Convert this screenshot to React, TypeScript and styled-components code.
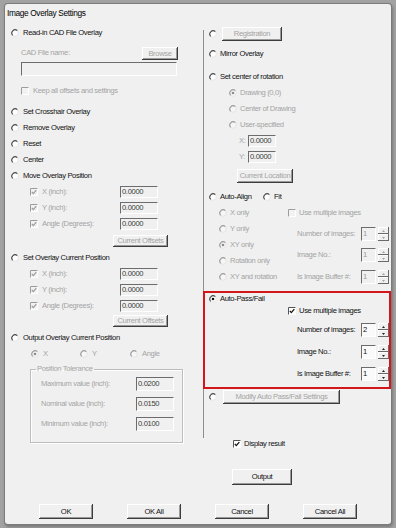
import React from "react";
import styled, { createGlobalStyle } from "styled-components";

const FONT = `"Liberation Sans", Arial, sans-serif`;
const FS = "7.6px";
const LS = "-0.35px";

const GlobalStyle = createGlobalStyle`
  html, body { margin: 0; padding: 0; }
  body {
    background: #a2a2a2;
    width: 396px;
    height: 528px;
    overflow: hidden;
    font-family: ${FONT};
  }
  #root { padding-top: 4px; }
`;

const Dialog = styled.div`
  box-sizing: border-box;
  margin-left: 5px;
  width: 386px;
  height: 520px;
  background: #f0f0f0;
  box-shadow: 0 0 0 1px #7b7b7b, 1px 2px 3px 1px rgba(0, 0, 0, 0.25);
  border-radius: 3px;
  display: flex;
  flex-direction: column;
  font-family: ${FONT};
  font-size: ${FS};
  letter-spacing: ${LS};
  color: #111;
`;

const Title = styled.div`
  box-sizing: border-box;
  height: 21px;
  padding: 4px 0 0 2px;
  font-size: 8.3px;
  line-height: 10px;
  color: #000;
`;

const Body = styled.div`
  display: flex;
  height: 475px;
`;

const LeftCol = styled.div`
  width: 198px;
  display: flex;
  flex-direction: column;
`;

const RightCol = styled.div`
  width: 188px;
  display: flex;
  flex-direction: column;
`;

const Pane = styled.div`
  margin-top: 5px;
  height: 408px;
  border-left: 1px solid #8e8e8e;
  display: flex;
  flex-direction: column;
`;

const Row = styled.div<{ $h: number; $pl?: number; $mt?: number; $pr?: number }>`
  box-sizing: border-box;
  flex-shrink: 0;
  display: flex;
  align-items: center;
  height: ${(p) => p.$h}px;
  padding-left: ${(p) => p.$pl ?? 0}px;
  padding-right: ${(p) => p.$pr ?? 0}px;
  margin-top: ${(p) => p.$mt ?? 0}px;
`;

const Text = styled.span<{ $off?: boolean; $w?: number; $gap?: number }>`
  white-space: nowrap;
  line-height: 10px;
  color: ${(p) => (p.$off ? "#a4a4a4" : "#111")};
  margin-left: ${(p) => p.$gap ?? 4}px;
  ${(p) => (p.$w ? `width: ${p.$w}px; flex-shrink: 0;` : "")}
`;

const Option = styled.div<{ $w?: number }>`
  display: flex;
  align-items: center;
  ${(p) => (p.$w ? `width: ${p.$w}px; flex-shrink: 0;` : "")}
`;

const Spacer = styled.div`
  flex: 1;
`;

const Field = styled.div<{ $w: number; $h: number; $ml?: number; $mt?: number; $white?: boolean; $dim?: boolean }>`
  box-sizing: border-box;
  flex-shrink: 0;
  width: ${(p) => p.$w}px;
  height: ${(p) => p.$h}px;
  margin-left: ${(p) => p.$ml ?? 0}px;
  margin-top: ${(p) => p.$mt ?? 0}px;
  border-top: 1px solid #6c6c6c;
  border-left: 1px solid #6c6c6c;
  border-right: 1px solid #ffffff;
  border-bottom: 1px solid #ffffff;
  background: ${(p) => (p.$white ? "#fafafa" : "#f0f0f0")};
  color: ${(p) => (p.$dim ? "#9a9a9a" : p.$white ? "#111" : "#3a3a3a")};
  font-size: ${FS};
  line-height: ${(p) => p.$h - 2}px;
  padding-left: 1px;
  overflow: hidden;
  white-space: nowrap;
`;

const Btn = styled.button<{ $w: number; $h: number; $off?: boolean; $ml?: number }>`
  box-sizing: border-box;
  flex-shrink: 0;
  width: ${(p) => p.$w}px;
  height: ${(p) => p.$h}px;
  margin: 0 0 0 ${(p) => p.$ml ?? 0}px;
  padding: 0;
  border: 0;
  background: #f0f0f0;
  box-shadow: inset -1px -1px #3c3c3c, inset 1px 1px #ffffff, inset -2px -2px #9a9a9a;
  font-family: ${FONT};
  font-size: ${FS};
  letter-spacing: ${LS};
  line-height: ${(p) => p.$h - 2}px;
  color: ${(p) => (p.$off ? "#a4a4a4" : "#111")};
  white-space: nowrap;
  cursor: default;
`;

const Group = styled.fieldset`
  box-sizing: border-box;
  margin: 3px 0 0 25px;
  width: 153px;
  padding: 0 0 8px 0;
  border: 1px solid #bdbdbd;
  box-shadow: 1px 1px 0 #ffffff, inset 1px 1px 0 #ffffff;
  min-inline-size: 0;
  display: flex;
  flex-direction: column;
`;

const Legend = styled.legend`
  margin-left: 5px;
  padding: 0 1px;
  line-height: 10px;
  color: #a4a4a4;
  font-size: ${FS};
`;

const AlignGrid = styled.div`
  display: flex;
  flex-shrink: 0;
`;

const AlignLeft = styled.div`
  width: 84px;
  padding-left: 15px;
  box-sizing: border-box;
  display: flex;
  flex-direction: column;
`;

const AlignRight = styled.div`
  display: flex;
  flex-direction: column;
`;

const RedBox = styled.div`
  box-sizing: border-box;
  flex-shrink: 0;
  margin: 6px 0 0 -1px;
  width: 188px;
  border: 2px solid #d4151c;
  padding-bottom: 6px;
  display: flex;
  flex-direction: column;
`;

const SpinWrap = styled.div`
  display: flex;
  height: 14px;
  flex-shrink: 0;
`;

const SpinArrows = styled.div`
  width: 11px;
  margin-left: 2px;
  display: flex;
  flex-direction: column;
`;

const SpinBtn = styled.div`
  flex: 1;
  display: flex;
  align-items: center;
  justify-content: center;
  background: #f0f0f0;
  box-shadow: inset -1px -1px #6a6a6a, inset 1px 1px #ffffff;
`;

const Footer = styled.div`
  display: flex;
  gap: 34px;
  padding: 4px 0 0 34px;
`;

const Mark = styled.svg`
  width: 8px;
  height: 8px;
  flex-shrink: 0;
  display: block;
`;

const Arrow = styled.svg`
  width: 3px;
  height: 2px;
  display: block;
`;

function Radio({ checked, off }: { checked?: boolean; off?: boolean }) {
  const dark = off ? "#9c9c9c" : "#4a4a4a";
  return (
    <Mark viewBox="0 0 8 8">
      <circle cx="4" cy="4" r="3.3" fill={off ? "#f6f6f6" : "#ffffff"} stroke="#e2e2e2" strokeWidth="0.9" />
      <path d="M6.33 1.67 A3.3 3.3 0 0 0 1.67 6.33" fill="none" stroke={dark} strokeWidth="1.1" />
      {checked && <circle cx="4" cy="4" r="1.3" fill={off ? "#8c8c8c" : "#111111"} />}
    </Mark>
  );
}

function Check({ checked, off }: { checked?: boolean; off?: boolean }) {
  return (
    <Mark viewBox="0 0 8 8">
      <rect x="0.5" y="0.5" width="7" height="7" fill={off ? "#f2f2f2" : "#ffffff"} stroke="#ffffff" />
      <path d="M0.5 7.5 V0.5 H7.5" stroke={off ? "#9c9c9c" : "#555555"} fill="none" />
      {checked && (
        <path d="M1.8 3.9 L3.3 5.6 L6.3 2.1" stroke={off ? "#9c9c9c" : "#111111"} strokeWidth="1.3" fill="none" />
      )}
    </Mark>
  );
}

function Spin({ value, off }: { value: string; off?: boolean }) {
  const c = off ? "#a4a4a4" : "#222222";
  return (
    <SpinWrap>
      <Field $w={15} $h={14} $white={!off} $dim={off}>
        {value}
      </Field>
      <SpinArrows>
        <SpinBtn>
          <Arrow viewBox="0 0 3 2">
            <path d="M0 2 L1.5 0 L3 2 Z" fill={c} />
          </Arrow>
        </SpinBtn>
        <SpinBtn>
          <Arrow viewBox="0 0 3 2">
            <path d="M0 0 L1.5 2 L3 0 Z" fill={c} />
          </Arrow>
        </SpinBtn>
      </SpinArrows>
    </SpinWrap>
  );
}

function CoordRows() {
  const rows = ["X (inch):", "Y (inch):", "Angle (Degrees):"];
  return (
    <>
      {rows.map((r) => (
        <Row key={r} $h={16} $pl={25}>
          <Option $w={90}>
            <Check checked off />
            <Text $off>{r}</Text>
          </Option>
          <Field $w={38} $h={12}>0.0000</Field>
        </Row>
      ))}
    </>
  );
}

function SpinRow({ label, value, off, mt, pl }: { label: string; value: string; off?: boolean; mt: number; pl: number }) {
  return (
    <Row $h={14} $mt={mt} $pl={pl}>
      <Text $off={off} $w={64} $gap={0}>
        {label}
      </Text>
      <Spin value={value} off={off} />
    </Row>
  );
}

export default function App() {
  return (
    <>
      <GlobalStyle />
      <Dialog>
        <Title>Image Overlay Settings</Title>
        <Body>
          <LeftCol>
            <Row $h={16} $pl={6}>
              <Radio />
              <Text>Read-in CAD File Overlay</Text>
            </Row>
            <Row $h={14} $mt={5} $pl={16} $pr={25}>
              <Text $off $gap={0}>CAD File name:</Text>
              <Spacer />
              <Btn $w={36} $h={13} $off>Browse</Btn>
            </Row>
            <Field $w={156} $h={14} $ml={16} $mt={2} />
            <Row $h={14} $mt={8} $pl={16}>
              <Check off />
              <Text $off>Keep all offsets and settings</Text>
            </Row>
            <Row $h={16} $mt={6} $pl={6}>
              <Radio />
              <Text>Set Crosshair Overlay</Text>
            </Row>
            <Row $h={16} $pl={6}>
              <Radio />
              <Text>Remove Overlay</Text>
            </Row>
            <Row $h={16} $pl={6}>
              <Radio />
              <Text>Reset</Text>
            </Row>
            <Row $h={16} $pl={6}>
              <Radio />
              <Text>Center</Text>
            </Row>
            <Row $h={16} $pl={6}>
              <Radio />
              <Text>Move Overlay Position</Text>
            </Row>
            <CoordRows />
            <Row $h={18} $pl={108}>
              <Btn $w={55} $h={12} $off>Current Offsets</Btn>
            </Row>
            <Row $h={16} $pl={6}>
              <Radio />
              <Text>Set Overlay Current Position</Text>
            </Row>
            <CoordRows />
            <Row $h={14} $pl={108}>
              <Btn $w={55} $h={12} $off>Current Offsets</Btn>
            </Row>
            <Row $h={16} $mt={2} $pl={6}>
              <Radio />
              <Text>Output Overlay Current Position</Text>
            </Row>
            <Row $h={15} $pl={26}>
              <Option $w={49}>
                <Radio checked off />
                <Text $off>X</Text>
              </Option>
              <Option $w={50}>
                <Radio off />
                <Text $off>Y</Text>
              </Option>
              <Option>
                <Radio off />
                <Text $off>Angle</Text>
              </Option>
            </Row>
            <Group>
              <Legend>Position Tolerance</Legend>
              {[
                ["Maximum value (inch):", "0.0200"],
                ["Nominal value (inch):", "0.0150"],
                ["Minimum value (inch):", "0.0100"],
              ].map(([l, v]) => (
                <Row key={l} $h={20} $pl={10}>
                  <Text $off $w={95} $gap={0}>
                    {l}
                  </Text>
                  <Field $w={38} $h={14}>{v}</Field>
                </Row>
              ))}
            </Group>
          </LeftCol>

          <RightCol>
            <Pane>
              <Row $h={15} $mt={-4} $pl={5}>
                <Radio />
                <Btn $w={60} $h={14} $off $ml={5}>Registration</Btn>
              </Row>
              <Row $h={16} $mt={5} $pl={5}>
                <Radio />
                <Text $gap={3}>Mirror Overlay</Text>
              </Row>
              <Row $h={16} $mt={7} $pl={5}>
                <Radio />
                <Text $gap={3}>Set center of rotation</Text>
              </Row>
              <Row $h={15} $pl={25}>
                <Radio checked off />
                <Text $off $gap={3}>Drawing (0,0)</Text>
              </Row>
              <Row $h={17} $pl={25}>
                <Radio off />
                <Text $off $gap={3}>Center of Drawing</Text>
              </Row>
              <Row $h={16} $pl={25}>
                <Radio off />
                <Text $off $gap={3}>User-specified</Text>
              </Row>
              <Row $h={14} $mt={1} $pl={35}>
                <Text $off $w={9} $gap={0}>X:</Text>
                <Field $w={28} $h={12}>0.0000</Field>
              </Row>
              <Row $h={14} $mt={2} $pl={35}>
                <Text $off $w={9} $gap={0}>Y:</Text>
                <Field $w={28} $h={12}>0.0000</Field>
              </Row>
              <Row $h={16} $mt={4} $pl={33}>
                <Btn $w={56} $h={14} $off>Current Location</Btn>
              </Row>
              <Row $h={16} $mt={5} $pl={5}>
                <Option $w={54}>
                  <Radio />
                  <Text $gap={3}>Auto-Align</Text>
                </Option>
                <Option>
                  <Radio />
                  <Text $gap={3}>Fit</Text>
                </Option>
              </Row>
              <AlignGrid>
                <AlignLeft>
                  {[
                    ["X only", false],
                    ["Y only", false],
                    ["XY only", true],
                    ["Rotation only", false],
                    ["XY and rotation", false],
                  ].map(([l, c]) => (
                    <Row key={l as string} $h={16}>
                      <Radio off checked={c as boolean} />
                      <Text $off $gap={3}>{l as string}</Text>
                    </Row>
                  ))}
                </AlignLeft>
                <AlignRight>
                  <Row $h={16}>
                    <Check off />
                    <Text $off $gap={3}>Use multiple images</Text>
                  </Row>
                  <SpinRow label="Number of images:" value="1" off mt={6} pl={9} />
                  <SpinRow label="Image No.:" value="1" off mt={7} pl={9} />
                  <SpinRow label="Is Image Buffer #:" value="1" off mt={8} pl={9} />
                </AlignRight>
              </AlignGrid>
              <RedBox>
                <Row $h={12} $pl={4}>
                  <Radio checked />
                  <Text $gap={3}>Auto-Pass/Fail</Text>
                </Row>
                <Row $h={11} $pl={83}>
                  <Check checked />
                  <Text $gap={3}>Use multiple images</Text>
                </Row>
                <SpinRow label="Number of images:" value="2" mt={7} pl={92} />
                <SpinRow label="Image No.:" value="1" mt={8} pl={92} />
                <SpinRow label="Is Image Buffer #:" value="1" mt={8} pl={92} />
              </RedBox>
              <Row $h={14} $mt={1} $pl={5}>
                <Radio />
                <Btn $w={117} $h={14} $off $ml={6}>Modify Auto Pass/Fail Settings</Btn>
              </Row>
            </Pane>
            <Row $h={14} $mt={-1} $pl={30}>
              <Check checked />
              <Text $gap={3}>Display result</Text>
            </Row>
            <Row $h={16} $mt={18} $pl={29}>
              <Btn $w={60} $h={16}>Output</Btn>
            </Row>
          </RightCol>
        </Body>
        <Footer>
          <Btn $w={54} $h={15}>OK</Btn>
          <Btn $w={54} $h={15}>OK All</Btn>
          <Btn $w={54} $h={15}>Cancel</Btn>
          <Btn $w={54} $h={15}>Cancel All</Btn>
        </Footer>
      </Dialog>
    </>
  );
}
